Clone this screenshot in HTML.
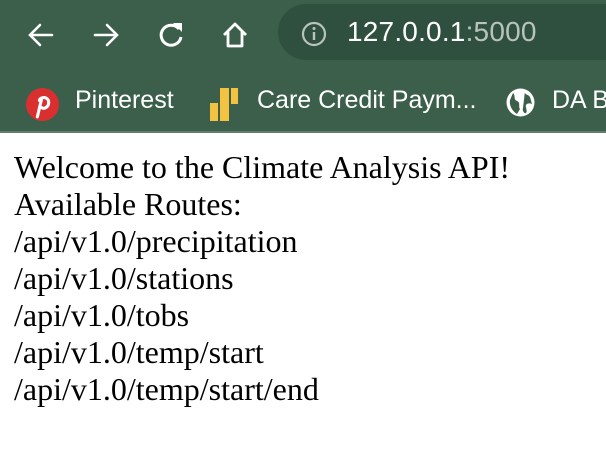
<!DOCTYPE html>
<html><head><meta charset="utf-8"><style>
html,body{margin:0;padding:0;width:606px;height:450px;overflow:hidden;background:#fff}
.top{position:absolute;left:0;top:0;width:606px;height:131px;background:#3b5f4b;border-bottom:2px solid #5f7d6c;overflow:hidden}
.pill{position:absolute;left:278px;top:4px;width:360px;height:56px;border-radius:28px;background:#30503f}
.url{position:absolute;left:347px;top:16px;font:28px "Liberation Sans",sans-serif;color:#fff;letter-spacing:0.2px;white-space:nowrap}
.url span{color:#b7c3bc}
.bm{position:absolute;top:86px;font:25px "Liberation Sans",sans-serif;color:#fff;white-space:nowrap}
.content{position:absolute;left:14px;top:149px;font:32px/37px "Liberation Serif",serif;color:#000;white-space:nowrap}
svg{position:absolute}
</style></head><body>
<div class="top">
<svg style="left:26px;top:20px" width="30" height="30" viewBox="0 0 30 30"><path d="M26 15H5M14 5L4 15l10 10" stroke="#fff" stroke-width="2.6" fill="none" stroke-linecap="round"/></svg>
<svg style="left:91px;top:20px" width="30" height="30" viewBox="0 0 30 30"><path d="M4 15h21M16 5l10 10-10 10" stroke="#fff" stroke-width="2.6" fill="none" stroke-linecap="round"/></svg>
<svg style="left:156px;top:20px" width="30" height="30" viewBox="0 0 30 30"><path d="M23 9A10 10 0 1 0 25 17" stroke="#fff" stroke-width="3" fill="none"/><path d="M17 3h9v9z" fill="#fff"/></svg>
<svg style="left:220px;top:20px" width="30" height="30" viewBox="0 0 30 30"><path d="M4 15L15 4l11 11M8 12v14h14V12" stroke="#fff" stroke-width="2.8" fill="none" stroke-linejoin="round"/></svg>
<div class="pill"></div>
<svg style="left:301px;top:21px" width="26" height="26" viewBox="0 0 26 26"><circle cx="13" cy="13" r="11" stroke="#b7c3bc" stroke-width="2.2" fill="none"/><path d="M13 11v8" stroke="#b7c3bc" stroke-width="2.4"/><circle cx="13" cy="7.5" r="1.5" fill="#b7c3bc"/></svg>
<div class="url">127.0.0.1<span>:5000</span></div>
<svg style="left:26px;top:88px" width="33" height="33" viewBox="0 0 32 32"><circle cx="16" cy="16" r="16" fill="#d9302f"/><path d="M13 12c1-4 9-4 9 2 0 4-4 7-7 5M15 11l-4 17" stroke="#fff" stroke-width="3" fill="none" stroke-linecap="round"/></svg>
<div class="bm" style="left:75px">Pinterest</div>
<svg style="left:210px;top:88px" width="29" height="34" viewBox="0 0 29 34"><rect x="0" y="15" width="8" height="18" fill="#f2c240"/><rect x="10" y="0" width="9" height="33" fill="#f2c240"/><rect x="21" y="0" width="7" height="16" fill="#f2c240"/></svg>
<div class="bm" style="left:257px">Care Credit Paym...</div>
<svg style="left:506px;top:88px" width="29" height="29" viewBox="0 0 29 29"><circle cx="14.5" cy="14.5" r="14" fill="#fff"/><path d="M7 5c3 3 0 6 4 8s1 5 3 8l-3 5C6 23 3 17 4 12zM19 3c-1 4 3 3 5 6l2 7c-2-1-5-1-6 1s2 6 0 8c-2 1-4-3-3-5z" fill="#3b5f4b"/></svg>
<div class="bm" style="left:552px">DA B</div>
</div>
<div class="content">Welcome to the Climate Analysis API!<br>Available Routes:<br>/api/v1.0/precipitation<br>/api/v1.0/stations<br>/api/v1.0/tobs<br>/api/v1.0/temp/start<br>/api/v1.0/temp/start/end</div>
</body></html>
